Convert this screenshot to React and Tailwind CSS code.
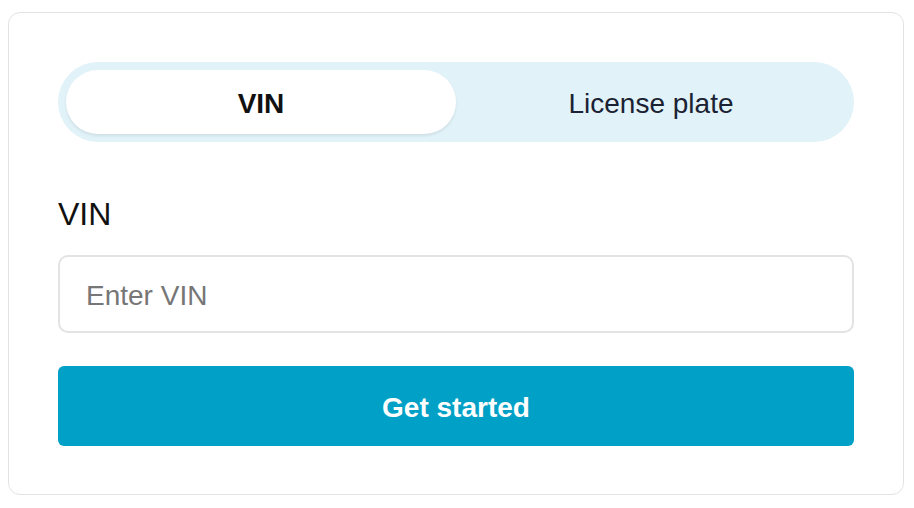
export default function App() {
  return (
    <div className="w-[914px] h-[508px] bg-white pt-[12px] pl-[8px]" style={{ fontFamily: '"Liberation Sans", Arial, sans-serif' }}>
      <div className="w-[896px] h-[483px] border border-[#e3e3e3] rounded-[12px] px-[49px] pt-[49px] flex flex-col">
        <div className="h-[80px] rounded-full bg-[#e1f2f9] p-2 grid grid-cols-2">
          <div className="rounded-full bg-white shadow-[0_2px_3px_rgba(0,0,0,0.08)] flex items-center justify-center pt-[3px] text-[28px] font-bold text-[#111]">
            VIN
          </div>
          <div className="flex items-center justify-center pt-[3px] text-[28px] text-[#1a2233]">
            License plate
          </div>
        </div>
        <label className="mt-[54px] block text-[32px] leading-[36px] text-[#111]">VIN</label>
        <input
          className="mt-[23px] h-[78px] w-full rounded-[10px] border-2 border-[#e3e3e3] px-[26px] pt-[4px] text-[28px] text-[#111] placeholder:text-[#767676] outline-none"
          placeholder="Enter VIN"
        />
        <button className="mt-[33px] h-[80px] w-full rounded-[6px] bg-[#01a1c7] pt-[3px] text-white text-[28px] font-bold">
          Get started
        </button>
      </div>
    </div>
  );
}
